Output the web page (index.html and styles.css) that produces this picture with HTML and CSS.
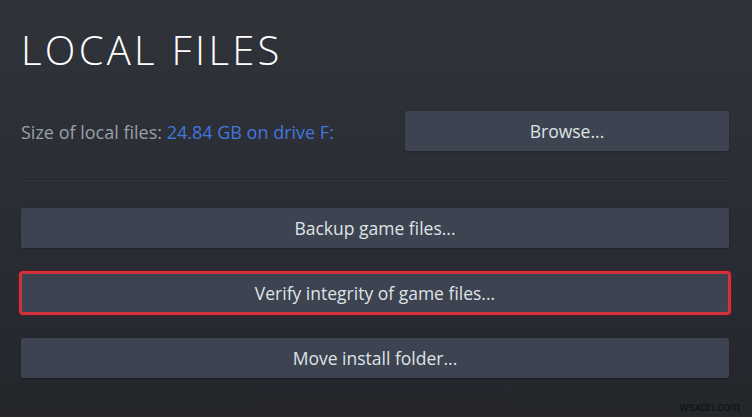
FILE: index.html
```html
<!DOCTYPE html>
<html lang="en">
<head>
<meta charset="utf-8">
<title>Local Files</title>
<link rel="stylesheet" href="styles.css">
</head>
<body>
<div class="page">
  <h1 class="title">LOCAL FILES</h1>
  <div class="size-row">
    <div class="size-label">Size of local files: <span class="size-value">24.84 GB on drive F:</span></div>
    <button class="btn btn-browse">Browse...</button>
  </div>
  <div class="separator"></div>
  <div class="actions">
    <button class="btn">Backup game files...</button>
    <button class="btn btn-highlight">Verify integrity of game files...</button>
    <button class="btn">Move install folder...</button>
  </div>
  <div class="watermark">wsxdn.com</div>
</div>
</body>
</html>
```
FILE: styles.css
```css
html, body {
  margin: 0;
  padding: 0;
  height: 100%;
}
body {
  background: linear-gradient(to bottom, #30333a 0%, #2a2d33 50%, #24262c 100%);
  font-family: "Open Sans", "Liberation Sans", sans-serif;
  color: #dfe3e6;
  overflow: hidden;
}
.page {
  display: flex;
  flex-direction: column;
  padding: 30px 23px 0 21px;
  height: 417px;
  box-sizing: border-box;
}
.title {
  margin: 0;
  font-size: 40px;
  line-height: 40px;
  font-weight: 300;
  letter-spacing: 3.3px;
  color: #ffffff;
}
.size-row {
  margin-top: 41px;
  display: flex;
  align-items: center;
  justify-content: space-between;
  height: 40px;
}
.size-label {
  font-size: 18px;
  color: #9aa0a8;
  padding-top: 1px;
}
.size-value {
  color: #4277dc;
}
.btn {
  display: block;
  height: 40px;
  border: 0;
  border-radius: 2px;
  background: #3d4350;
  color: #dfe3e6;
  font-family: "Open Sans", "Liberation Sans", sans-serif;
  font-size: 17.5px;
  padding: 0;
  cursor: pointer;
  box-shadow: 0 1px 2px rgba(0, 0, 0, 0.25);
}
.btn-browse {
  width: 324px;
}
.separator {
  margin-top: 28px;
  height: 0;
  border-top: 1px solid rgba(0, 0, 0, 0.12);
  border-bottom: 1px solid rgba(255, 255, 255, 0.025);
}
.actions {
  margin-top: 27px;
  display: flex;
  flex-direction: column;
  gap: 25px;
}
.actions .btn {
  width: 100%;
}
.btn-highlight {
  outline: 3px solid #cf323d;
  outline-offset: -1px;
  box-shadow: 0 0 0 3px rgba(120, 20, 28, 0.55);
}
.watermark {
  margin-top: auto;
  align-self: flex-end;
  margin-right: -11px;
  margin-bottom: 3px;
  font-family: "Liberation Sans", sans-serif;
  font-size: 12px;
  color: #0f1115;
}
```
